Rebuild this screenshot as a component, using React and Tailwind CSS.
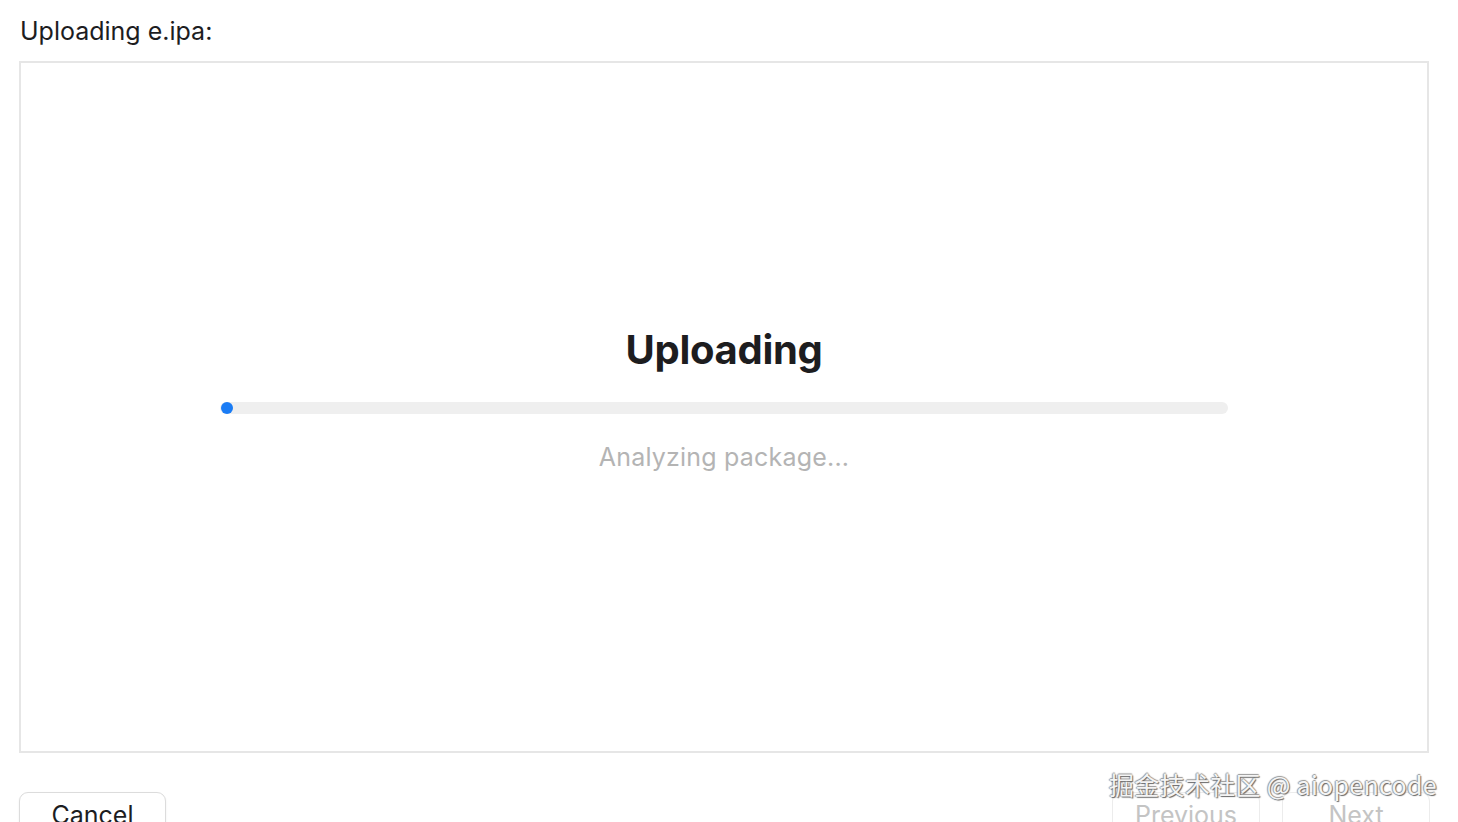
export default function App() {
  return (
    <div className="relative h-[822px] w-[1458px] overflow-hidden bg-white font-['Inter','Liberation_Sans',sans-serif]">
      {/* header label */}
      <div className="pl-[20px] pt-[14px] text-[25px] leading-[34px] text-[#1d1d1f]">Uploading e.ipa:</div>

      {/* main panel */}
      <div className="ml-[19px] mt-[13px] flex h-[692px] w-[1410px] flex-col items-center border-2 border-[#e6e6e6] bg-white">
        <h1 className="mt-[261px] text-[40px] font-bold leading-[52px] tracking-[-0.3px] text-[#1d1d1f]">Uploading</h1>
        <div className="mt-[26px] flex h-[12px] w-[1008px] items-center rounded-full bg-[#efefef]">
          <div className="ml-[1px] h-[12px] w-[12px] rounded-full bg-[#1a7cf5]"></div>
        </div>
        <p className="mt-[26px] text-[25px] leading-[34px] tracking-[0.2px] text-[#b4b4b4]">Analyzing package...</p>
      </div>

      {/* footer buttons */}
      <div className="mt-[39px] flex items-start justify-between pl-[19px] pr-[28px]">
        <button className="h-[44px] w-[147px] rounded-[9px] border border-[#dcdcdc] bg-white pt-[1px] text-[25px] leading-[34px] text-[#1d1d1f] shadow-[0_1px_2px_rgba(0,0,0,0.08)]">
          Cancel
        </button>
        <div className="flex gap-[22px]">
          <button className="h-[44px] w-[148px] rounded-[9px] border border-[#ececec] bg-white pt-[1px] text-[25px] leading-[34px] text-[#c4c4c4]">
            Previous
          </button>
          <button className="h-[44px] w-[148px] rounded-[9px] border border-[#ececec] bg-white pt-[1px] text-[25px] leading-[34px] text-[#c4c4c4]">
            Next
          </button>
        </div>
      </div>

      {/* watermark */}
      <div className="absolute left-[1109px] top-[767px] font-['Noto_Sans_CJK_SC','Inter',sans-serif] text-[25px] leading-[34px] tracking-[0.3px] text-[#f4f4f4] [text-shadow:1px_1px_1px_#666,-1px_0_1px_#999,0_-1px_1px_#999]">
        掘金技术社区 @ aiopencode
      </div>
    </div>
  );
}
